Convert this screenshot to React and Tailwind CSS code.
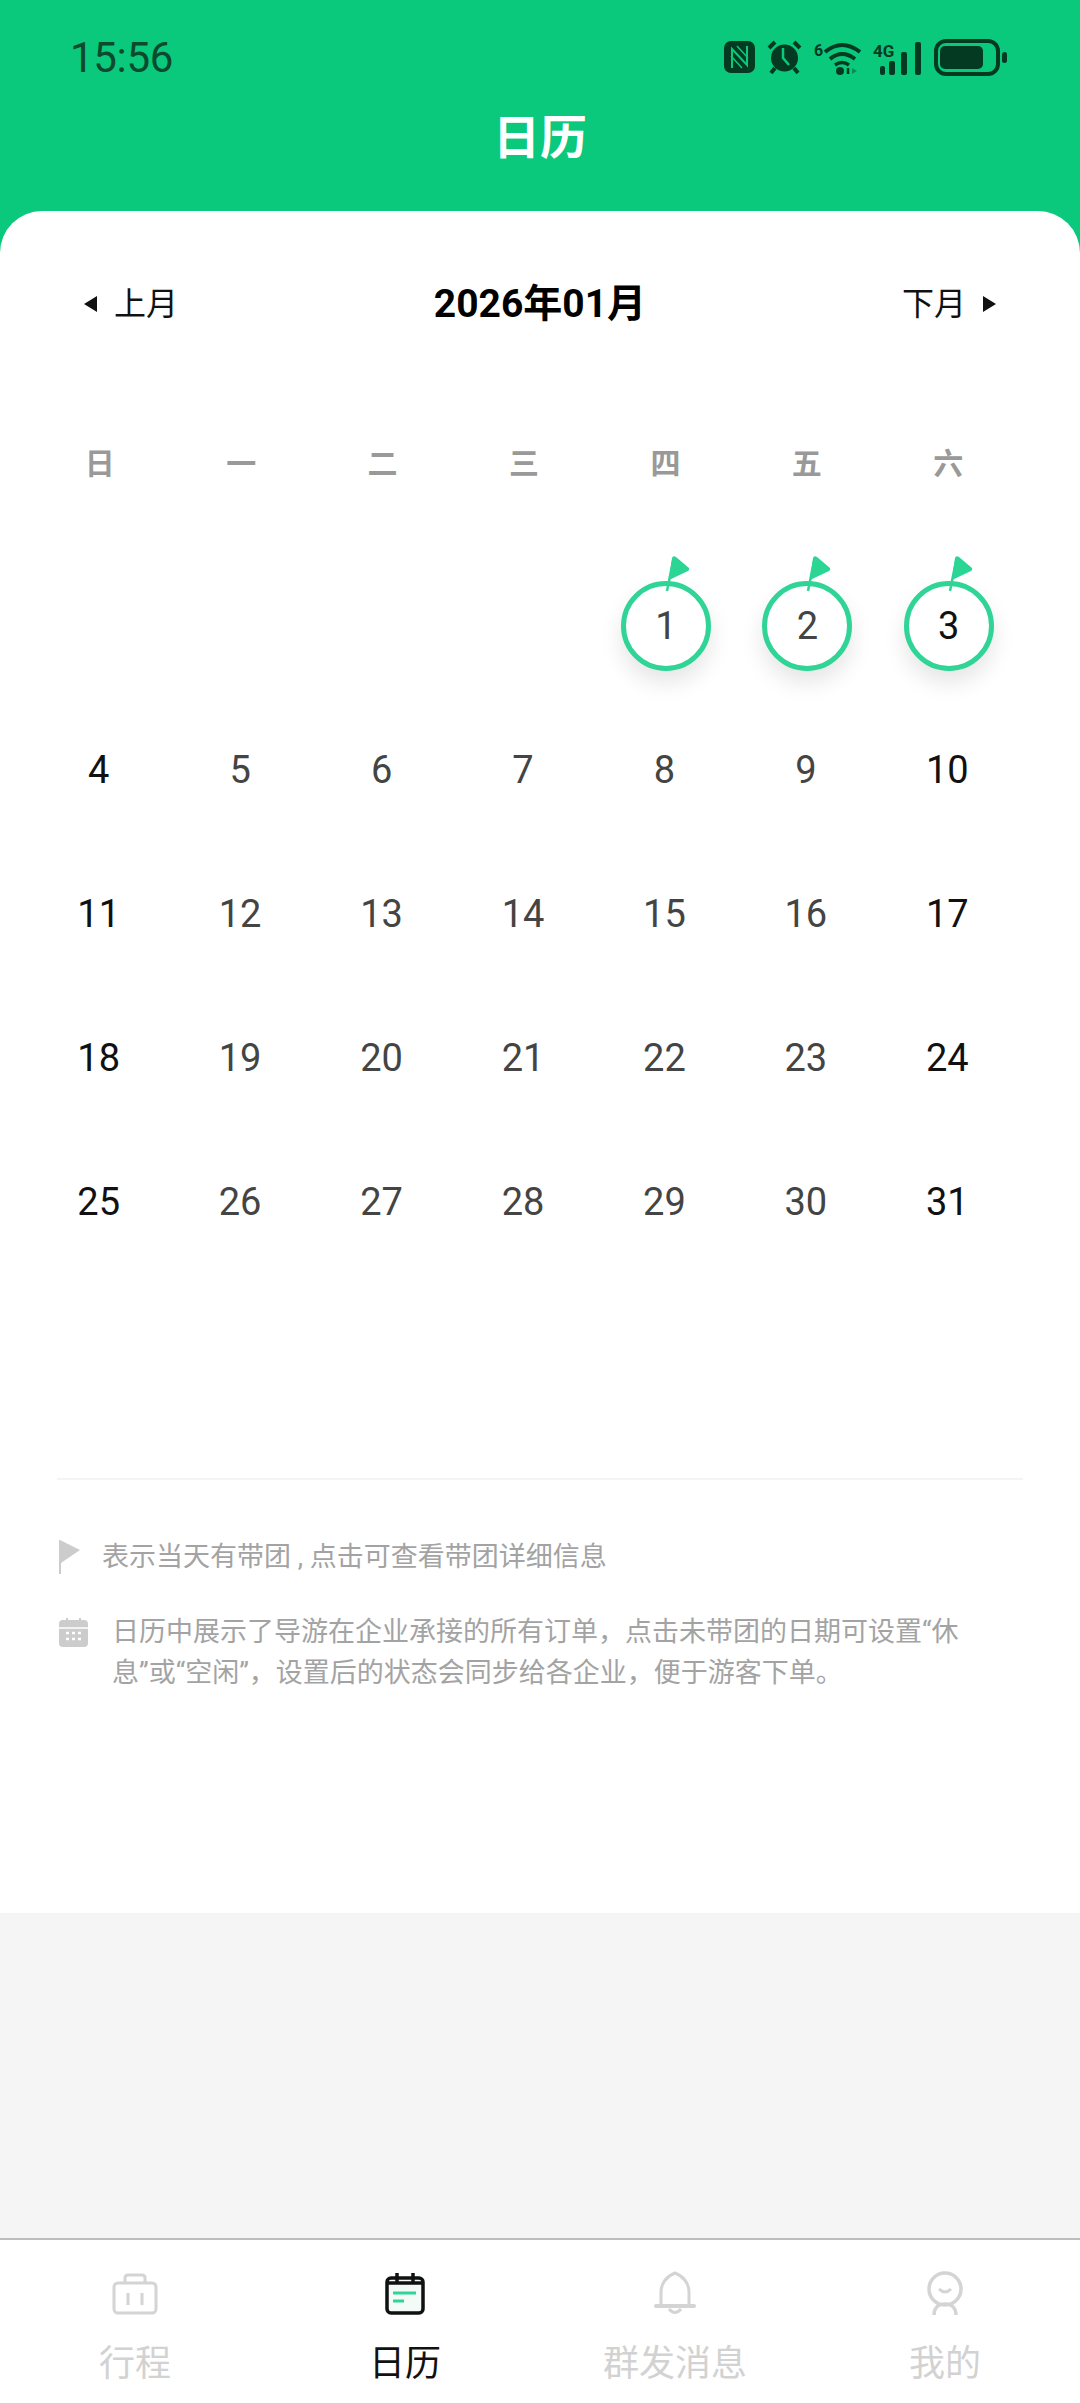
const weekdays = ["日", "一", "二", "三", "四", "五", "六"];

// 2026-01 starts on a Thursday
const days = [null, null, null, null, 1, 2, 3];
for (let d = 4; d <= 31; d++) days.push(d);

const FlagDay = ({ day, weekend }) => (
  <div className="relative ml-[3px] flex h-[90px] w-[90px] items-center justify-center rounded-full border-[5px] border-[#2fd496] bg-white shadow-[0_12px_22px_rgba(0,0,0,0.1)]">
    <svg className="absolute left-[37px] top-[-31px]" width="32" height="38" viewBox="0 0 32 38">
      <path d="M4 36 L10 6" stroke="#2fd496" strokeWidth="2.5" fill="none" />
      <path d="M9 3 Q10 0 13 2 L26 13 Q27 15 25 16 L6 25 Z" fill="#2bd694" />
    </svg>
    <span className={weekend ? "text-[#111]" : "text-[#444]"}>{day}</span>
  </div>
);

const StatusIcons = () => (
  <div className="flex items-center gap-[12px] text-[#053a22]">
    <svg width="31" height="32" viewBox="0 0 31 32">
      <rect x="0" y="0" width="31" height="32" rx="7" fill="currentColor" />
      <path d="M8 27 V8 L23 24 V5" stroke="#0ac87c" strokeWidth="2" fill="none" />
      <path d="M13 5 L24 17 M7 15 L18 27" stroke="#0ac87c" strokeWidth="1.5" fill="none" />
    </svg>
    <svg width="35" height="34" viewBox="0 0 35 34" fill="currentColor">
      <circle cx="17.5" cy="18" r="13.5" />
      <path d="M16 8 V18 L22 25" stroke="#0ac87c" strokeWidth="2.5" fill="none" />
      <path d="M2 8 L8 2 M33 8 L27 2 M8 28 L4 33 M27 28 L31 33" stroke="currentColor" strokeWidth="4" fill="none" />
    </svg>
    <svg width="47" height="35" viewBox="0 0 47 35" fill="none" stroke="currentColor">
      <text x="0" y="16" fontSize="16" fontWeight="700" fill="currentColor" stroke="none">6</text>
      <path d="M11 12 Q28 -2 46 12" strokeWidth="4" />
      <path d="M16 19 Q28 9 41 19" strokeWidth="4" />
      <path d="M21 25 Q28 20 35 25" strokeWidth="3.5" />
      <circle cx="26" cy="31" r="4" fill="currentColor" stroke="none" />
      <path d="M34 28 V34" strokeWidth="2.5" />
      <path d="M38 28 L43 31 L38 34 Z" fill="currentColor" stroke="none" opacity="0.4" />
    </svg>
    <svg width="49" height="35" viewBox="0 0 49 35" fill="currentColor">
      <text x="0" y="17" fontSize="17" fontWeight="700">4G</text>
      <rect x="7" y="26" width="5" height="9" rx="2" />
      <rect x="16" y="21" width="6" height="14" rx="2" />
      <rect x="28" y="12" width="6" height="23" rx="2" />
      <rect x="42" y="2" width="6" height="33" rx="2" />
    </svg>
    <svg width="73" height="37" viewBox="0 0 73 37" fill="currentColor">
      <rect x="2" y="2" width="62" height="33" rx="10" fill="none" stroke="currentColor" strokeWidth="4" />
      <rect x="6" y="7" width="43" height="23" rx="5" />
      <rect x="68" y="13" width="5" height="11" rx="2.5" />
    </svg>
  </div>
);

const tabs = [
  {
    label: "行程",
    icon: (
      <svg width="48" height="48" viewBox="0 0 48 48" fill="none" stroke="#d4d4d4" strokeWidth="3">
        <rect x="3" y="14" width="42" height="30" rx="4" />
        <path d="M14 14 V9 Q14 6 17 6 H31 Q34 6 34 9 V14" />
        <path d="M17 24 V36 M31 24 V36" />
      </svg>
    ),
  },
  {
    label: "日历",
    active: true,
    icon: (
      <svg width="48" height="48" viewBox="0 0 48 48" fill="none" stroke="#111" strokeWidth="3.5">
        <rect x="6" y="9" width="36" height="35" rx="4" fill="#f2fbf7" />
        <path d="M6 14 H42" />
        <path d="M16 4 V14 M32 4 V14" />
        <path d="M12 24 H35" stroke="#2fd496" strokeWidth="3" />
        <path d="M12 32 H23" stroke="#2fd496" strokeWidth="3" />
      </svg>
    ),
  },
  {
    label: "群发消息",
    icon: (
      <svg width="48" height="48" viewBox="0 0 48 48" fill="none" stroke="#d4d4d4" strokeWidth="3">
        <path d="M10 36 V23 C10 14 16 7 24 4 C32 7 38 14 38 23 V36" />
        <path d="M5 37 H43" strokeLinecap="round" strokeWidth="4" />
        <path d="M18 40 Q24 47 30 40" />
      </svg>
    ),
  },
  {
    label: "我的",
    icon: (
      <svg width="48" height="48" viewBox="0 0 48 48" fill="none" stroke="#d4d4d4" strokeWidth="3.5">
        <circle cx="24" cy="20" r="16" />
        <path d="M18 20 Q24 26 30 20" strokeWidth="3" />
        <path d="M13 46 C13 38 18 35 24 35 C30 35 35 38 35 46" />
      </svg>
    ),
  },
];

export default function App() {
  return (
    <div className="flex h-[2403px] w-[1080px] flex-col bg-[#0ac87c] [font-family:Roboto,'Noto_Sans_CJK_SC',sans-serif]">
      <div className="flex h-[114px] items-center justify-between pl-[70px] pr-[73px]">
        <span className="text-[42px] tracking-[-0.3px] text-[#0b4a2d]">15:56</span>
        <StatusIcons />
      </div>
      <div className="h-[97px] text-center text-[47px] font-bold leading-[48px] text-white">日历</div>

      <div className="h-[1702px] rounded-t-[42px] bg-white pt-[63px]">
        <div className="flex h-[60px] items-center justify-between px-[84px] text-[32px] text-[#111]">
          <div className="flex items-center gap-[17px]">
            <span className="h-0 w-0 border-y-[8px] border-r-[13px] border-y-transparent border-r-[#111]" />
            <span>上月</span>
          </div>
          <span className="text-[39px] font-bold text-black">2026年01月</span>
          <div className="flex items-center gap-[17px]">
            <span>下月</span>
            <span className="h-0 w-0 border-y-[8px] border-l-[13px] border-y-transparent border-l-[#111]" />
          </div>
        </div>

        <div className="ml-[29px] mt-[99px] grid h-[60px] w-[990px] grid-cols-7 items-center text-center text-[30px] font-bold text-[#999]">
          {weekdays.map((w) => (
            <span key={w}>{w}</span>
          ))}
        </div>

        <div className="ml-[28px] mt-[61px] grid w-[990px] grid-cols-7 text-[38px]">
          {days.map((d, i) => {
            const weekend = i % 7 === 0 || i % 7 === 6;
            return (
              <div key={i} className="flex h-[144px] items-center justify-center">
                {d && d <= 3 ? (
                  <FlagDay day={d} weekend={weekend} />
                ) : (
                  <span className={weekend ? "text-[#111]" : "text-[#444]"}>{d}</span>
                )}
              </div>
            );
          })}
        </div>

        <div className="ml-[57px] mr-[57px] mt-[204px] h-[2px] bg-[#f4f4f4]" />

        <div className="ml-[59px] mt-[59px] flex items-center gap-[21px] text-[27px] leading-[36px] text-[#a3a3a3]">
          <svg width="22" height="34" viewBox="0 0 22 34" fill="#cccccc">
            <path d="M1 0 L21 10 L2 23 V34 H0 V0 Z" />
          </svg>
          <span>表示当天有带团 , 点击可查看带团详细信息</span>
        </div>

        <div className="ml-[59px] mr-[110px] mt-[37px] flex gap-[24px] text-[27px] leading-[41px] text-[#a3a3a3]">
          <svg className="mt-[6px] shrink-0" width="29" height="29" viewBox="0 0 29 29">
            <rect x="0" y="2" width="29" height="27" rx="4" fill="#cccccc" />
            <path d="M0 10 H29" stroke="#fff" strokeWidth="1.5" />
            <path d="M8 0 V5 M21 0 V5" stroke="#cccccc" strokeWidth="2" />
            <path d="M7 15 h3 M13 15 h3 M19 15 h3 M7 21 h3 M13 21 h3 M19 21 h3" stroke="#fff" strokeWidth="2.5" />
          </svg>
          <p>日历中展示了导游在企业承接的所有订单，点击未带团的日期可设置“休息”或“空闲”，设置后的状态会同步给各企业，便于游客下单。</p>
        </div>
      </div>

      <div className="flex-1 bg-[#f5f5f5]" />

      <div className="grid h-[165px] grid-cols-4 border-t-2 border-[#bdbdbd] bg-white pt-[29px]">
        {tabs.map((t) => (
          <div key={t.label} className="flex flex-col items-center">
            {t.icon}
            <span className={`mt-[22px] text-[36px] leading-[50px] ${t.active ? "text-[#111]" : "text-[#d2d2d2]"}`}>
              {t.label}
            </span>
          </div>
        ))}
      </div>
    </div>
  );
}
